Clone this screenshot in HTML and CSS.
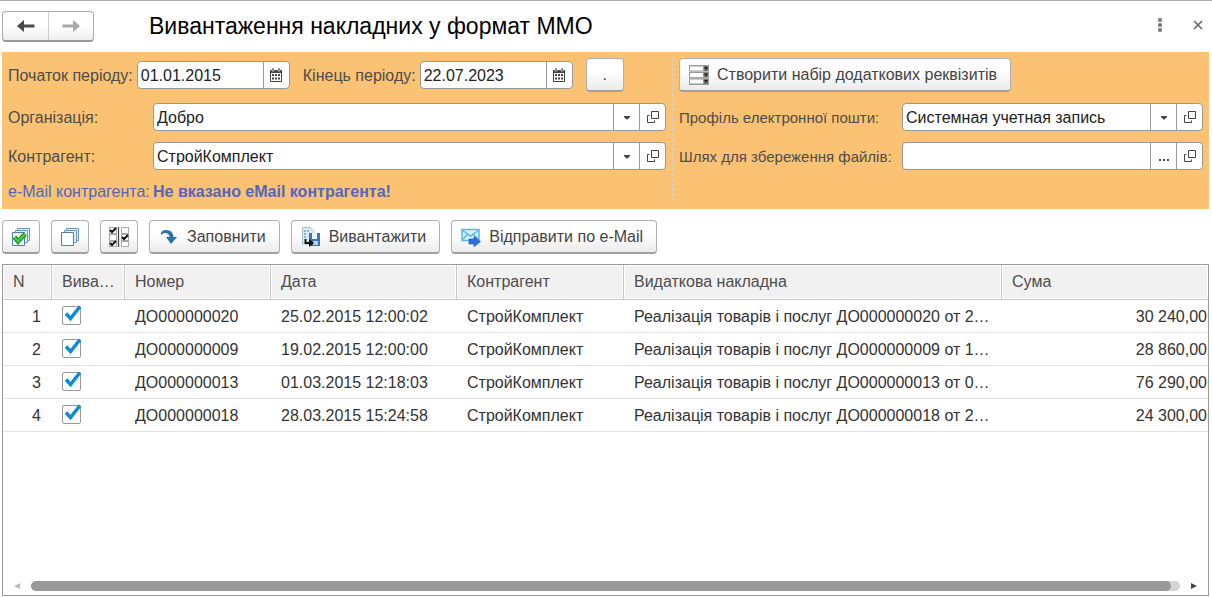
FILE: index.html
```html
<!DOCTYPE html>
<html lang="uk">
<head>
<meta charset="utf-8">
<title>Вивантаження накладних у формат ММО</title>
<link rel="stylesheet" href="styles.css">
</head>
<body>
<svg class="defs" aria-hidden="true">
  <symbol id="calendar" viewBox="0 0 14 14"><path d="M1 2h12v11q0 1-1 1H2q-1 0-1-1z" fill="#444"/><path d="M2 5h10v8H2z" fill="#fff"/><path d="M3 0h2v3H3zM9 0h2v3H9z" fill="#444" stroke="#fff" stroke-width=".6"/><path d="M3 6h2v2H3zM6 6h2v2H6zM9 6h2v2H9zM3 9.500h2v2H3zM6 9.500h2v2H6zM9 9.500h2v2H9z" fill="#444"/></symbol>
  <symbol id="open" viewBox="0 0 14 14"><path d="M5.500 1.500h7v7h-7zM3.500 5.500h-2v7h7v-2" fill="none" stroke="#444"/></symbol>
  <symbol id="down" viewBox="0 0 14 14"><path d="M4 6h6v1L7.500 9.500h-1L4 7z" fill="#444"/></symbol>
  <symbol id="tick" viewBox="0 0 21 21"><path d="M4 8.500 8.500 13.500 18 1.500" fill="none" stroke="#0d8bd3" stroke-width="3.400"/></symbol>
</svg>

<header class="titlebar">
  <nav class="history" aria-label="Навігація">
    <button class="history-btn" type="button" aria-label="Назад"><svg width="18" height="14" viewBox="0 0 18 14"><path d="M0 7 7 1v4.500h10.500v3H7V13z" fill="#4a4a4a"/></svg></button>
    <button class="history-btn" type="button" aria-label="Вперед"><svg width="18" height="14" viewBox="0 0 18 14"><path d="M18 7 11 1v4.500H.5v3H11V13z" fill="#aaa"/></svg></button>
  </nav>
  <h1 class="title">Вивантаження накладних у формат ММО</h1>
  <button class="plain-btn" type="button" aria-label="Ще"><svg width="14" height="14" viewBox="0 0 14 14" fill="#737373"><circle cx="7" cy="2" r="2"/><circle cx="7" cy="7" r="2"/><circle cx="7" cy="12" r="2"/></svg></button>
  <button class="plain-btn" type="button" aria-label="Закрити"><svg width="14" height="14" viewBox="0 0 14 14"><path d="m3 3 8 8M11 3l-8 8" stroke="#666" stroke-width="1.600"/></svg></button>
</header>

<form class="panel">
  <div class="main-fields">
    <div class="period">
      <label for="from">Початок періоду:</label>
      <div class="field date"><input id="from" type="text" value="01.01.2015"><button type="button" aria-label="Вибрати дату"><svg class="mini"><use href="#calendar"/></svg></button></div>
      <label class="next" for="to">Кінець періоду:</label>
      <div class="field date"><input id="to" type="text" value="22.07.2023"><button type="button" aria-label="Вибрати дату"><svg class="mini"><use href="#calendar"/></svg></button></div>
      <button class="btn square next" type="button">.</button>
    </div>
    <label for="org">Організація:</label>
    <div class="field"><input id="org" type="text" value="Добро"><button type="button" aria-label="Список"><svg class="mini"><use href="#down"/></svg></button><button type="button" aria-label="Відкрити"><svg class="mini"><use href="#open"/></svg></button></div>
    <label for="partner">Контрагент:</label>
    <div class="field"><input id="partner" type="text" value="СтройКомплект"><button type="button" aria-label="Список"><svg class="mini"><use href="#down"/></svg></button><button type="button" aria-label="Відкрити"><svg class="mini"><use href="#open"/></svg></button></div>
    <span class="mail">e-Mail контрагента:</span>
    <strong class="mail">Не вказано eMail контрагента!</strong>
  </div>
  <div class="extra-fields">
    <div class="create">
      <button class="btn" type="button"><svg width="20" height="20" viewBox="0 0 20 20"><path d="M0 0h20v20H0z" fill="#999"/><path d="M1 1.500h13v4H1zM1 8h13v4H1zM1 14.500h13v4H1z" fill="#fff"/><path d="M15 1h4v5h-4zM15 7.500h4v5h-4zM15 14h4v5h-4z" fill="#777"/><path d="M0 6.500h20M0 13h20" stroke="#bbb"/><path d="M15 2h4l-2 3zM15 8.500h4l-2 3zM15 15h4l-2 3z" fill="#222"/></svg>Створити набір додаткових реквізитів</button>
    </div>
    <label for="profile">Профіль електронної пошти:</label>
    <div class="field"><input id="profile" type="text" value="Системная учетная запись"><button type="button" aria-label="Список"><svg class="mini"><use href="#down"/></svg></button><button type="button" aria-label="Відкрити"><svg class="mini"><use href="#open"/></svg></button></div>
    <label for="path">Шлях для збереження файлів:</label>
    <div class="field"><input id="path" type="text" value=""><button type="button" aria-label="Вибрати"><svg class="mini" viewBox="0 0 14 14" fill="#444"><path d="M2 10h2v2H2zM6 10h2v2H6zM10 10h2v2h-2z"/></svg></button><button type="button" aria-label="Відкрити"><svg class="mini"><use href="#open"/></svg></button></div>
  </div>
</form>

<div class="toolbar">
  <button class="btn square" type="button" aria-label="Позначити всі"><svg width="20" height="20" viewBox="0 0 20 20"><path d="M6.500 1.500h12v12h-12z" fill="#e3edf5" stroke="#7095b5"/><path d="M4.500 3.500h12v12h-12z" fill="#e3edf5" stroke="#7095b5"/><path d="M1.500 5.500h12v13h-12z" fill="#fff" stroke="#557fa5"/><path d="M3.500 10 7 14.500 14 7" fill="none" stroke="#16811a" stroke-width="4.500"/><path d="M3.500 10 7 14.500 14 7" fill="none" stroke="#42d338" stroke-width="2.500"/></svg></button>
  <button class="btn square" type="button" aria-label="Зняти позначки"><svg width="20" height="20" viewBox="0 0 20 20"><path d="M6.500 1.500h12v12h-12z" fill="#e3edf5" stroke="#7095b5"/><path d="M4.500 3.500h12v12h-12z" fill="#e3edf5" stroke="#7095b5"/><path d="M1.500 5.500h12v13h-12z" fill="#fff" stroke="#557fa5"/></svg></button>
  <button class="btn square" type="button" aria-label="Інвертувати"><svg width="20" height="20" viewBox="0 0 20 20"><path d="M0 0h8v20H0zM12 0h8v20h-8z" fill="#aaa"/><path d="M1 1h6v5H1zM1 8h6v5H1zM1 15h6v4H1zM13 1h6v5h-6zM13 8h6v5h-6zM13 15h6v4h-6z" fill="#fff"/><path d="M9.500 0v20" stroke="#444" stroke-width="1.200"/><path d="m1 3 2 2 4-4M1 16l2 2 4-4M13 10l2 2 4-4" fill="none" stroke="#111" stroke-width="2"/></svg></button>
  <button class="btn" type="button"><svg width="20" height="20" viewBox="0 0 20 20"><path d="M2 6Q3 3 7 3q7 0 7.500 7H18l-6 7-5-7h3.500Q10 6 6 6q-2 0-4 2z" fill="#2674ae"/></svg>Заповнити</button>
  <button class="btn" type="button"><svg width="20" height="20" viewBox="0 0 20 20"><path d="M1.500.5H9l4 4V17H1.500z" fill="#dceaf6" stroke="#a3bdd2"/><path d="M3 3h2v2H3zM6 3h2v2H6zM3 6h2v2H3zM3 9h2v2H3z" fill="#8db0d0"/><path d="M8 6h11v13H8z" fill="#3b76ae"/><path d="M11 6h5v6h-5z" fill="#e7f2fa"/><path d="M12 14h5v4h-5z" fill="#b6d3e9"/><path d="M4.500 12v4h5" fill="none" stroke="#111" stroke-width="2"/><path d="m8 12 5 4-5 4z" fill="#111"/></svg>Вивантажити</button>
  <button class="btn" type="button"><svg width="20" height="20" viewBox="0 0 20 20"><path d="M1 2.500h17v11H1z" fill="#d8f1ff" stroke="#55b7ee" stroke-width="1.500"/><path d="m1 3 8.500 6L18 3M1 13l6-6M18 13l-6-6" fill="none" stroke="#55b7ee" stroke-width="1.500"/><path d="M8 12h5V9.500l6.500 5.200-6.500 5V17H8z" fill="#2d6fdc" stroke="#1c55b8" stroke-width=".6"/></svg>Відправити по e-Mail</button>
</div>

<main class="grid">
  <table>
    <colgroup><col class="c-n"><col class="c-mark"><col class="c-num"><col class="c-date"><col class="c-partner"><col class="c-doc"><col></colgroup>
    <thead><tr><th>N</th><th>Вива…</th><th>Номер</th><th>Дата</th><th>Контрагент</th><th>Видаткова накладна</th><th>Сума</th></tr></thead>
    <tbody>
      <tr><td class="n">1</td><td class="mark"><label class="check"><input type="checkbox" checked aria-label="Вивантажити ДО000000020"><svg><use href="#tick"/></svg></label></td><td>ДО000000020</td><td>25.02.2015 12:00:02</td><td>СтройКомплект</td><td>Реалізація товарів і послуг ДО000000020 от 2…</td><td class="sum">30 240,00</td></tr>
      <tr><td class="n">2</td><td class="mark"><label class="check"><input type="checkbox" checked aria-label="Вивантажити ДО000000009"><svg><use href="#tick"/></svg></label></td><td>ДО000000009</td><td>19.02.2015 12:00:00</td><td>СтройКомплект</td><td>Реалізація товарів і послуг ДО000000009 от 1…</td><td class="sum">28 860,00</td></tr>
      <tr><td class="n">3</td><td class="mark"><label class="check"><input type="checkbox" checked aria-label="Вивантажити ДО000000013"><svg><use href="#tick"/></svg></label></td><td>ДО000000013</td><td>01.03.2015 12:18:03</td><td>СтройКомплект</td><td>Реалізація товарів і послуг ДО000000013 от 0…</td><td class="sum">76 290,00</td></tr>
      <tr><td class="n">4</td><td class="mark"><label class="check"><input type="checkbox" checked aria-label="Вивантажити ДО000000018"><svg><use href="#tick"/></svg></label></td><td>ДО000000018</td><td>28.03.2015 15:24:58</td><td>СтройКомплект</td><td>Реалізація товарів і послуг ДО000000018 от 2…</td><td class="sum">24 300,00</td></tr>
    </tbody>
  </table>
  <div class="scroll">
    <button class="plain-btn" type="button" aria-label="Прокрутити ліворуч"><svg width="6" height="6" viewBox="0 0 6 6"><path d="M6 0v6L0 3z" fill="#bbb"/></svg></button>
    <div class="track"><div class="thumb"></div></div>
    <button class="plain-btn" type="button" aria-label="Прокрутити праворуч"><svg width="6" height="6" viewBox="0 0 6 6"><path d="M0 0v6l6-3z" fill="#444"/></svg></button>
  </div>
</main>
</body>
</html>
```

FILE: styles.css
```css
* { box-sizing: border-box; }

body {
  margin: 0;
  min-height: 100vh;
  padding: 0 3px 1px 2px;
  display: flex;
  flex-direction: column;
  background: #fff;
  color: #333;
  font: 16px/20px "Liberation Sans", Arial, sans-serif;
}

body::before {
  content: "";
  height: 1px;
  margin: 0 -3px 0 -2px;
  background: #a9adb2;
}

button, input { font: inherit; color: inherit; }
button { padding: 0; cursor: pointer; }
svg { display: block; flex: none; }
.defs { position: absolute; width: 0; height: 0; }
.mini { width: 14px; height: 14px; }

.titlebar {
  display: flex;
  align-items: center;
  height: 51px;
}

.history {
  display: flex;
  height: 31px;
  border: 1px solid #aaa;
  border-bottom: 2px solid #999;
  border-radius: 4px;
  background: linear-gradient(#fff 50%, #eee);
}

.history-btn {
  width: 45px;
  display: grid;
  place-items: center;
  border: 0;
  background: none;
}

.history-btn + .history-btn { border-left: 1px solid #ccc; }

.title {
  flex: 1;
  margin: 0 0 0 55px;
  padding-bottom: 2px;
  color: #000;
  font-size: 23px;
  font-weight: 400;
  line-height: 28px;
}

.plain-btn {
  width: 30px;
  display: grid;
  place-items: center;
  border: 0;
  background: none;
}

.titlebar .plain-btn { width: 38px; padding-bottom: 4px; }
.titlebar .plain-btn:last-child { width: 22px; margin-left: 8px; }

.panel {
  display: grid;
  grid-template-columns: 658fr 531fr;
  gap: 6px;
  padding: 6px 6px 8px;
  background: #fac272;
  color: #4d4d4d;
}

.main-fields, .extra-fields {
  display: grid;
  grid-template-columns: 145px 1fr;
  grid-template-rows: 34px 28px 28px 20px;
  row-gap: 11px;
  align-items: center;
  white-space: nowrap;
}

.extra-fields {
  grid-template-columns: 223px 1fr;
  padding-left: 6px;
  border-left: 1px dashed #d2d2d2;
}

.panel label, .mail { padding-top: 2px; }
.extra-fields label { font-size: 15px; }

.period, .create { grid-column: 1 / -1; display: flex; align-items: center; }
.period { gap: 4px; }
.period .next { margin-left: 9px; }
.mail { color: #5566bb; }

.field {
  display: flex;
  min-width: 0;
  height: 28px;
  border: 1px solid #999;
  border-radius: 4px;
  background: #fff;
  overflow: hidden;
}

.date { width: 153px; }

.field input {
  flex: 1;
  min-width: 0;
  padding: 2px 3px 0;
  border: 0;
  outline: 0;
  background: none;
  color: #222;
}

.field button {
  width: 26px;
  display: grid;
  place-items: center;
  border: 0;
  border-left: 1px solid #999;
  background: none;
}

.btn {
  display: flex;
  align-items: center;
  justify-content: center;
  gap: 8px;
  height: 34px;
  padding: 0 13px 0 9px;
  border: 1px solid #b0b0b0;
  border-bottom: 2px solid #a0a0a0;
  border-radius: 4px;
  background: linear-gradient(#fff 40%, #ebebeb);
  color: #444;
  white-space: nowrap;
}

.square { width: 38px; padding: 0; }

.toolbar {
  display: flex;
  gap: 11px;
  padding: 11px 0 10px;
}

.grid {
  flex: 1;
  display: flex;
  flex-direction: column;
  border: 1px solid #999;
}

table {
  width: 100%;
  table-layout: fixed;
  border-collapse: separate;
  border-spacing: 0;
}

.c-n { width: 49px; }
.c-mark { width: 73px; }
.c-num { width: 146px; }
.c-date { width: 186px; }
.c-partner { width: 167px; }
.c-doc { width: 378px; }

th, td {
  height: 33px;
  padding: 2px 0 0 10px;
  border-bottom: 1px solid #e2e2e2;
  text-align: left;
  font-weight: 400;
  white-space: nowrap;
}

th {
  height: 35px;
  padding-top: 0;
  border-right: 1px solid #c8c8c8;
  border-bottom-color: #c8c8c8;
  background: #f1f1f1;
  box-shadow: inset 0 0 0 1px #fff;
  color: #4d4d4d;
}

th:last-child { border-right: 0; }
td.n { padding-right: 11px; text-align: right; }
td.mark { padding-top: 0; }
td.sum { padding-right: 1px; text-align: right; }

.check {
  position: relative;
  display: block;
  width: 21px;
  height: 21px;
}

.check input {
  appearance: none;
  display: block;
  width: 19px;
  height: 19px;
  margin: 0;
  border: 1px solid #999;
  border-radius: 2px;
  background: #fff;
}

.check svg {
  position: absolute;
  inset: -1px 0 0;
  width: 21px;
  height: 21px;
  visibility: hidden;
  pointer-events: none;
}

.check input:checked + svg { visibility: visible; }

.scroll {
  display: flex;
  align-items: center;
  margin-top: auto;
  padding-bottom: 4px;
}

.scroll .plain-btn { width: 28px; height: 10px; }

.track {
  flex: 1;
  height: 10px;
  border-radius: 5px;
  background: #d4d4d4;
}

.thumb {
  width: calc(100% - 9px);
  height: 10px;
  border-radius: 5px;
  background: #999;
}
```
